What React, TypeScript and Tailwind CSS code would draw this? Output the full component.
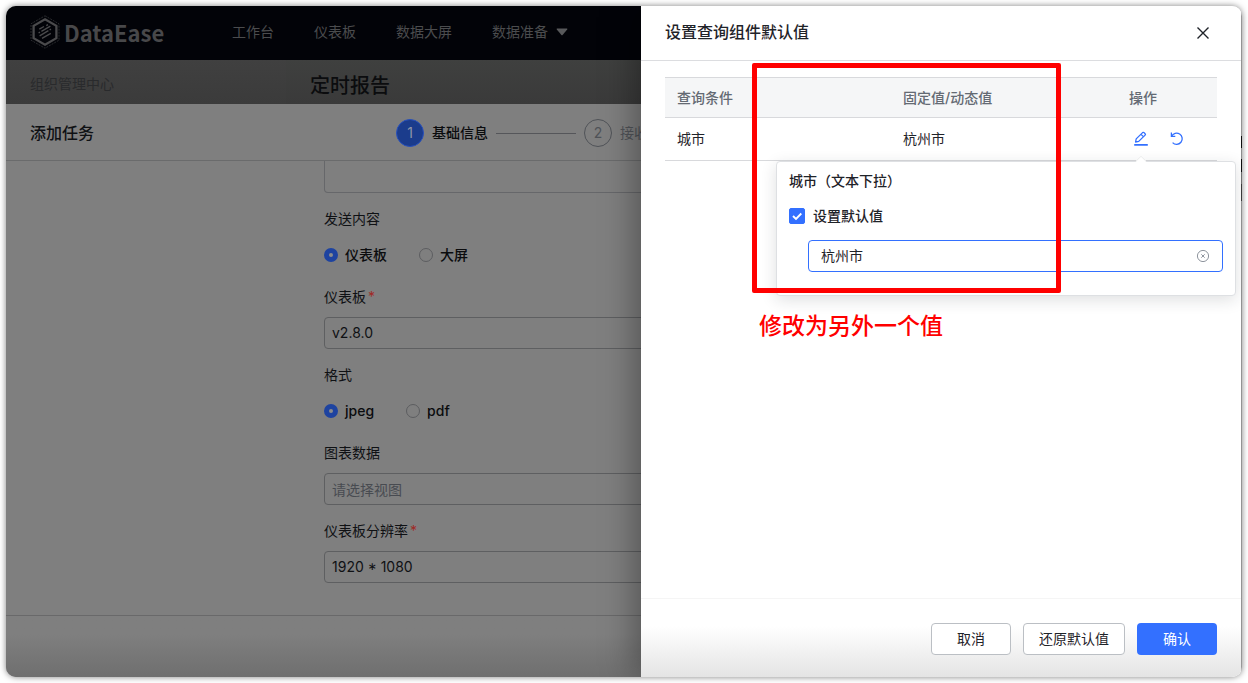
import type { ReactNode } from 'react';

function LogoMark() {
  return (
    <svg width="30" height="34" viewBox="0 0 30 34" fill="none" aria-hidden="true">
      <path d="M15 0.8 L29 8.8 V25.2 L15 33.2 L1 25.2 V8.8 Z" stroke="#2e2f32" strokeWidth="0.9" strokeDasharray="2 1" />
      <path d="M15 4.3 L26.4 10.8 V23.2 L15 29.7 L3.6 23.2 V10.8 Z" stroke="#4a4a4c" strokeWidth="2.3" />
      <path
        d="M9.3 14.2 L14 11.5 M16.3 10.6 L18 9.6 M8.6 18 L10 17.2 M11.4 16.4 L20.4 11.2 M9.6 20.8 L18.4 15.7 M19.6 15 L21 14.2 M12 23.4 L20.8 18.3"
        stroke="#4a4a4c"
        strokeWidth="1.4"
      />
    </svg>
  );
}

function EditIcon() {
  return (
    <svg width="16" height="16" viewBox="0 0 16 16" fill="none" stroke="#3370ff" aria-hidden="true">
      <path d="M2.6 11 L3.2 7.9 L9.6 1.6 Q10.3 1 11 1.6 L12.1 2.7 Q12.8 3.4 12.1 4.1 L5.7 10.4 Z" strokeWidth="1.3" strokeLinejoin="round" />
      <path d="M8 3.3 L10.4 5.7" strokeWidth="1.2" />
      <path d="M1.2 13.9 H14.8" strokeWidth="1.6" />
    </svg>
  );
}

function ResetIcon() {
  return (
    <svg width="16" height="16" viewBox="0 0 16 16" fill="none" stroke="#3370ff" strokeWidth="1.3" aria-hidden="true">
      <path d="M2.6 5.2 A5.6 5.6 0 1 1 3.6 11.6" />
      <path d="M2.4 1.6 V5.4 H6.3" />
    </svg>
  );
}

function Field({ label, required, htmlFor, children }: { label: string; required?: boolean; htmlFor?: string; children: ReactNode }) {
  return (
    <div className="flex flex-col gap-2">
      <label htmlFor={htmlFor} className="flex h-6 items-center text-[#0f1114]">
        {label}
        {required && <span className="ml-0.5 text-[#a02a26]">*</span>}
      </label>
      {children}
    </div>
  );
}

function Radio({ name, label, checked }: { name: string; label: string; checked?: boolean }) {
  return (
    <label className="flex items-center gap-[7px] font-medium text-[#0b0c0e]">
      <input
        type="radio"
        name={name}
        defaultChecked={checked}
        className="size-3.5 appearance-none rounded-full border border-[#5c5d60] checked:border-5 checked:border-[#1e43a0] checked:bg-[#8c8c8c]"
      />
      {label}
    </label>
  );
}

const box = 'h-8 w-full appearance-none rounded border border-[#5e5f61] bg-transparent px-[7px] text-[#0f1114] outline-none';

function BackgroundPage() {
  return (
    <div className="flex min-w-0 flex-1 flex-col overflow-hidden bg-[#7f7f7f]">
      <header className="flex h-[54px] shrink-0 items-center bg-[#020308] pb-0.5 pl-6 text-[#4b4c4e]">
        <div className="flex w-[202px] items-center gap-1">
          <LogoMark />
          <span className="font-['Noto_Sans_CJK_SC',sans-serif] text-[22px] leading-8 font-bold text-[#48484a]">DataEase</span>
        </div>
        <nav className="flex shrink-0 items-center gap-10 whitespace-nowrap">
          <a href="#workbench">工作台</a>
          <a href="#panel">仪表板</a>
          <a href="#screen">数据大屏</a>
          <a href="#data" className="flex items-center gap-2">
            数据准备
            <svg width="12" height="8" viewBox="0 0 12 8" fill="#58595b" aria-hidden="true">
              <path d="M1.2 0.5 H10.8 Q11.8 0.6 11.2 1.5 L6.6 7 Q6 7.6 5.4 7 L0.8 1.5 Q0.2 0.6 1.2 0.5 Z" />
            </svg>
          </a>
        </nav>
      </header>

      <div className="flex h-11 shrink-0 items-center bg-linear-to-b from-[#404040] to-[#3b3b3b] whitespace-nowrap">
        <div className="flex h-full w-[280px] items-center pt-1 pl-6 text-[#292a2c]">组织管理中心</div>
        <h1 className="flex h-full flex-1 items-center bg-linear-to-b from-[#3f403f] to-[#3a3a3a] pt-2 pl-6 text-xl font-medium text-[#0b0c0e]">定时报告</h1>
      </div>

      <div className="flex h-[57px] shrink-0 items-center border-b border-[#6a6b6c] pt-0.5 pl-6 whitespace-nowrap">
        <h2 className="w-[366px] shrink-0 text-base font-medium text-[#0f1114]">添加任务</h2>
        <ol className="flex items-center gap-2">
          <li className="flex items-center gap-2 font-medium text-[#0b0c0e]">
            <span className="flex size-7 items-center justify-center rounded-full border border-[#2750bd] bg-[#1b3c8c] font-normal text-[#8e95a8]">1</span>
            基础信息
          </li>
          <li aria-hidden="true" className="h-px w-20 bg-[#55565a]" />
          <li className="flex items-center gap-2 text-[#505358]">
            <span className="flex size-7 items-center justify-center rounded-full border border-[#505358]">2</span>
            接收
          </li>
        </ol>
      </div>

      <form className="flex flex-1 flex-col gap-3.5 pl-[318px]">
        <textarea aria-label="备注" className="h-8 w-[600px] resize-none rounded-b border border-t-0 border-[#66676a] outline-none" />
        <div className="flex w-[600px] flex-col gap-3.5">
          <Field label="发送内容">
            <div className="flex h-8 items-center gap-8">
              <Radio name="content" label="仪表板" checked />
              <Radio name="content" label="大屏" />
            </div>
          </Field>
          <Field label="仪表板" required htmlFor="panel">
            <select id="panel" className={box}>
              <option>v2.8.0</option>
            </select>
          </Field>
          <Field label="格式">
            <div className="flex h-8 items-center gap-8">
              <Radio name="format" label="jpeg" checked />
              <Radio name="format" label="pdf" />
            </div>
          </Field>
          <Field label="图表数据" htmlFor="views">
            <input id="views" placeholder="请选择视图" className={`${box} placeholder:text-[#484b51]`} />
          </Field>
          <Field label="仪表板分辨率" required htmlFor="resolution">
            <select id="resolution" className={box}>
              <option>1920 * 1080</option>
            </select>
          </Field>
        </div>
      </form>

      <footer className="h-[62px] shrink-0 border-t border-[#69696a] bg-linear-to-b from-[#7f7f7f] from-30% to-[#6f6f6f]" />
    </div>
  );
}

function DefaultValuePopover() {
  return (
    <div className="absolute top-[155px] right-[5px] w-[460px] rounded border border-[#dee0e3] bg-white px-3 pt-2 pb-[23px] shadow-[0_4px_16px_rgba(31,35,41,0.14)]">
      <span className="absolute -top-[5px] right-[90px] size-2 rotate-45 rounded-tl-xs border-t border-l border-[#eceded] bg-white" />
      <h3 className="h-[22px] leading-[22px] font-medium text-[#1f2329]">城市（文本下拉）</h3>
      <label className="mt-3 flex h-6 items-center gap-2 font-medium text-[#1f2329]">
        <span className="relative flex size-4">
          <input type="checkbox" defaultChecked className="size-4 appearance-none rounded-xs border border-[#bbbfc4] checked:border-[#3370ff] checked:bg-[#3370ff]" />
          <svg className="pointer-events-none absolute inset-0" width="16" height="16" viewBox="0 0 16 16" fill="none" aria-hidden="true">
            <path d="M4 8 L7 11 L12.3 5.5" stroke="white" strokeWidth="1.9" />
          </svg>
        </span>
        设置默认值
      </label>
      <div className="mt-3 ml-[19px] flex h-8 items-center rounded border border-[#3370ff] bg-white px-3">
        <input aria-label="城市" defaultValue="杭州市" className="min-w-0 flex-1 text-[#1f2329] outline-none" />
        <button type="button" aria-label="清除">
          <svg width="14" height="14" viewBox="0 0 14 14" fill="none" stroke="#8f959e" aria-hidden="true">
            <circle cx="7" cy="7" r="5.6" strokeWidth="1" />
            <path d="M5.3 5.3 L8.7 8.7 M8.7 5.3 L5.3 8.7" strokeWidth="1" />
          </svg>
        </button>
      </div>
    </div>
  );
}

function Drawer() {
  return (
    <aside className="relative z-10 flex w-[600px] shrink-0 flex-col bg-white shadow-[-6px_0_32px_rgba(0,0,0,0.35)]">
      <header className="flex h-[55px] shrink-0 items-center justify-between border-b border-[#dcdde0] pr-8 pl-6">
        <h2 className="pb-0.5 text-base font-medium text-[#1f2329]">设置查询组件默认值</h2>
        <button type="button" aria-label="关闭">
          <svg width="12" height="12" viewBox="0 0 12 12" stroke="#1f2329" strokeWidth="1.4" aria-hidden="true">
            <path d="M0.5 0.5 L11.5 11.5 M11.5 0.5 L0.5 11.5" />
          </svg>
        </button>
      </header>

      <div className="flex-1 px-6 pt-4">
        <table className="w-full table-fixed text-left">
          <thead>
            <tr className="h-10 border-y border-[#d8d9dc] bg-[#f5f6f7] text-[#646a73]">
              <th className="px-3 font-medium">查询条件</th>
              <th className="px-3 font-medium">固定值/动态值</th>
              <th className="w-[100px] px-3 font-medium">操作</th>
            </tr>
          </thead>
          <tbody>
            <tr className="h-[43px] border-b border-[#d8d9dc] text-[#1f2329]">
              <td className="px-3">城市</td>
              <td className="px-3">杭州市</td>
              <td className="px-4">
                <div className="flex gap-5">
                  <button type="button" aria-label="编辑">
                    <EditIcon />
                  </button>
                  <button type="button" aria-label="还原">
                    <ResetIcon />
                  </button>
                </div>
              </td>
            </tr>
          </tbody>
        </table>
      </div>

      <footer className="flex shrink-0 justify-end gap-3 border-t border-[#f5f5f5] bg-linear-to-b from-white from-35% to-[#e4e4e4] pt-6 pr-6 pb-[22px]">
        <button type="button" className="h-8 w-20 rounded border border-[#bbbfc4] bg-white text-[#1f2329]">取消</button>
        <button type="button" className="h-8 rounded border border-[#bbbfc4] bg-white px-[15px] text-[#1f2329]">还原默认值</button>
        <button type="button" className="h-8 w-20 rounded bg-[#3370ff] text-white">确认</button>
      </footer>

      <DefaultValuePopover />
      <div className="pointer-events-none absolute top-[57px] left-[111px] h-[230px] w-[309px] rounded-xs border-5 border-[#ff0000]" />
      <p className="absolute top-[304px] left-[118px] text-[23px] leading-8 font-medium whitespace-nowrap text-[#ff0000]">修改为另外一个值</p>
    </aside>
  );
}

export default function App() {
  return (
    <div className="flex h-screen min-h-[640px] bg-white p-1.5 font-['Inter','Noto_Sans_CJK_SC',sans-serif] text-sm">
      <div className="flex min-w-0 flex-1 overflow-hidden rounded-[10px] shadow-[0_0_6px_rgba(0,0,0,0.5)]">
        <BackgroundPage />
        <Drawer />
        <div className="w-px shrink-0 bg-[linear-gradient(#a8a8a8_0_130px,#111_130px_142px,#a0a0a0_142px_153px,#111_153px_166px,#808080_166px_178px,#444_178px_195px,#a8a8a8_195px)]" />
      </div>
    </div>
  );
}
